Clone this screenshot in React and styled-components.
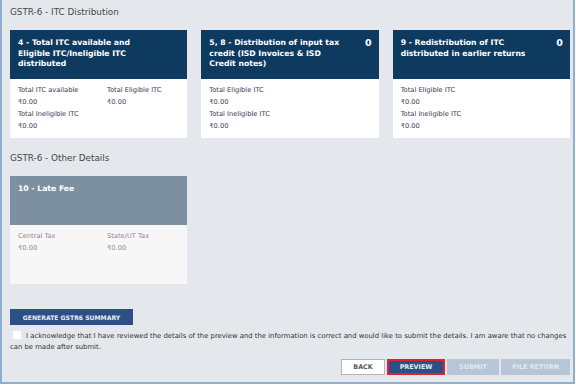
import React from "react";
import styled, { createGlobalStyle } from "styled-components";

const GlobalStyle = createGlobalStyle`
  body {
    margin: 0;
    background: #ffffff;
    font-family: "DejaVu Sans", Verdana, sans-serif;
  }
`;

const Frame = styled.div`
  box-sizing: border-box;
  width: 575px;
  height: 384px;
  padding: 6px 3px 7px 8px;
  background: #e4e8ec;
  border-left: 2px solid #8eaed0;
  border-right: 2px solid #8eaed0;
  border-bottom: 2px solid #8eaed0;
  display: flex;
  flex-direction: column;
`;

const SectionTitle = styled.div`
  font-size: 8.8px;
  line-height: 12px;
  color: #474747;
  margin-top: ${(p) => p.$top || 0}px;
  margin-bottom: 12px;
`;

const CardRow = styled.div`
  display: grid;
  grid-template-columns: repeat(3, 1fr);
  gap: 14px;
`;

const Card = styled.div`
  display: flex;
  flex-direction: column;
  height: 108px;
`;

const CardHead = styled.div`
  box-sizing: border-box;
  height: 49px;
  padding: 8px 7px 0 8px;
  background: ${(p) => (p.$muted ? "#7c90a2" : "#0f3a5f")};
  color: #ffffff;
  display: flex;
  justify-content: space-between;
  align-items: flex-start;
`;

const HeadTitle = styled.div`
  max-width: 137px;
  font-size: 7.7px;
  font-weight: bold;
  line-height: 10.5px;
`;

const Count = styled.div`
  font-size: 9.5px;
  font-weight: bold;
  line-height: 10px;
`;

const CardBody = styled.div`
  flex: 1;
  box-sizing: border-box;
  padding: 5px 8px 0 8px;
  background: ${(p) => (p.$muted ? "#f7f7f7" : "#ffffff")};
  display: grid;
  grid-template-columns: 89px 1fr;
  align-content: start;
  font-size: 6.7px;
  line-height: 12px;
  color: ${(p) => (p.$muted ? "#8e8590" : "#3a3450")};
`;

const Field = styled.div`
  grid-column: ${(p) => p.$col || "auto"};
`;

const SummaryButton = styled.button`
  align-self: flex-start;
  margin-top: 25px;
  width: 123px;
  height: 16px;
  padding: 0;
  border: none;
  background: #2c5086;
  color: #e8eef6;
  font-family: "DejaVu Sans", Verdana, sans-serif;
  font-size: 6.1px;
  font-weight: bold;
`;

const Ack = styled.div`
  margin-top: 6px;
  font-size: 6.85px;
  line-height: 10.5px;
  color: #333333;
`;

const Box = styled.span`
  display: inline-block;
  width: 8px;
  height: 8px;
  margin: 0 5px 0 3px;
  background: #ffffff;
  vertical-align: -1px;
`;

const Actions = styled.div`
  margin-top: 7px;
  display: flex;
  justify-content: flex-end;
  gap: 2px;
`;

const ActionButton = styled.button`
  box-sizing: border-box;
  width: ${(p) => p.$w}px;
  height: 16px;
  padding: 0;
  font-family: "DejaVu Sans", Verdana, sans-serif;
  font-size: 6.4px;
  font-weight: bold;
  border: 1px solid #b4b4b4;
  background: #ffffff;
  color: #5a5a5a;

  &[data-kind="primary"] {
    background: #2c5086;
    color: #e8eef6;
    border: 2px solid #e0202c;
  }
  &[data-kind="disabled"] {
    background: #b7c6d7;
    color: #e3e9f0;
    border: none;
  }
`;

const itcCards = [
  {
    title: "4 - Total ITC available and Eligible ITC/Ineligible ITC distributed",
    fields: [
      ["Total ITC available", 1],
      ["Total Eligible ITC", 2],
      ["₹0.00", 1],
      ["₹0.00", 2],
      ["Total Ineligible ITC", 1],
      ["₹0.00", 1],
    ],
  },
  {
    title: "5, 8 - Distribution of input tax credit (ISD Invoices & ISD Credit notes)",
    count: "0",
    fields: [
      ["Total Eligible ITC", 1],
      ["₹0.00", 1],
      ["Total Ineligible ITC", 1],
      ["₹0.00", 1],
    ],
  },
  {
    title: "9 - Redistribution of ITC distributed in earlier returns",
    count: "0",
    fields: [
      ["Total Eligible ITC", 1],
      ["₹0.00", 1],
      ["Total Ineligible ITC", 1],
      ["₹0.00", 1],
    ],
  },
];

function SummaryCard({ title, count, fields, muted }) {
  return (
    <Card>
      <CardHead $muted={muted}>
        <HeadTitle>{title}</HeadTitle>
        {count && <Count>{count}</Count>}
      </CardHead>
      <CardBody $muted={muted}>
        {fields.map(([text, col], i) => (
          <Field key={i} $col={col}>{text}</Field>
        ))}
      </CardBody>
    </Card>
  );
}

export default function App() {
  return (
    <>
      <GlobalStyle />
      <Frame>
        <SectionTitle>GSTR-6 - ITC Distribution</SectionTitle>
        <CardRow>
          {itcCards.map((c) => (
            <SummaryCard key={c.title} {...c} />
          ))}
        </CardRow>

        <SectionTitle $top={14}>GSTR-6 - Other Details</SectionTitle>
        <CardRow>
          <SummaryCard
            muted
            title="10 - Late Fee"
            fields={[
              ["Central Tax", 1],
              ["State/UT Tax", 2],
              ["₹0.00", 1],
              ["₹0.00", 2],
            ]}
          />
        </CardRow>

        <SummaryButton>GENERATE GSTR6 SUMMARY</SummaryButton>
        <Ack>
          <Box />
          I acknowledge that I have reviewed the details of the preview and the information is
          correct and would like to submit the details. I am aware that no changes can be made
          after submit.
        </Ack>

        <Actions>
          <ActionButton $w={44}>BACK</ActionButton>
          <ActionButton $w={58} data-kind="primary">PREVIEW</ActionButton>
          <ActionButton $w={52} data-kind="disabled">SUBMIT</ActionButton>
          <ActionButton $w={69} data-kind="disabled">FILE RETURN</ActionButton>
        </Actions>
      </Frame>
    </>
  );
}
